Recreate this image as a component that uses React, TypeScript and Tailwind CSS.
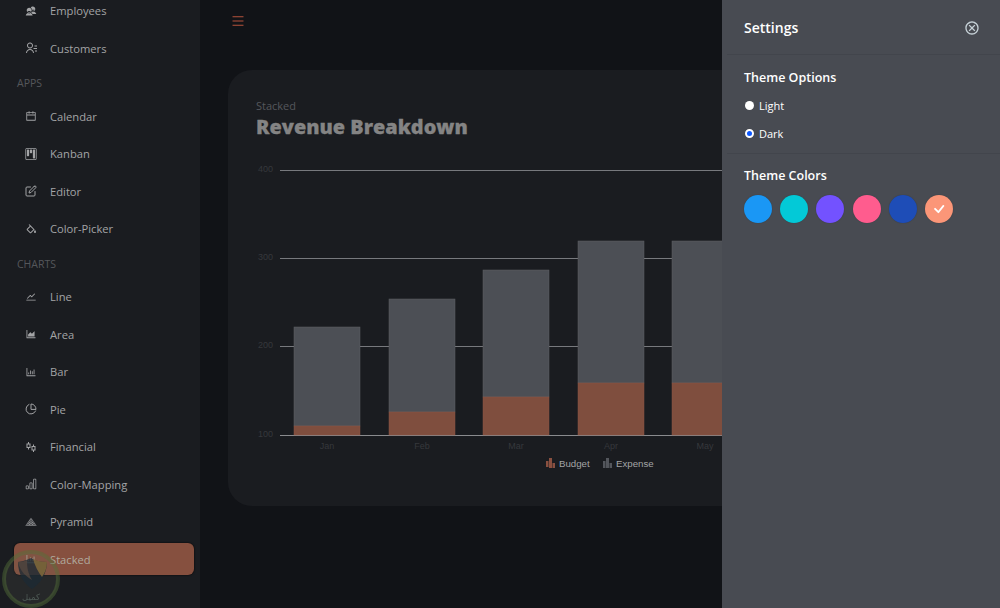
import { IoMdContacts } from "react-icons/io";
import { RiContactsLine, RiStockLine } from "react-icons/ri";
import { AiOutlineCalendar, AiOutlineStock, AiOutlineAreaChart, AiOutlineBarChart, AiOutlineMenu } from "react-icons/ai";
import { BsKanban, BsBarChart, BsCheck } from "react-icons/bs";
import { FiEdit, FiPieChart } from "react-icons/fi";
import { BiColorFill } from "react-icons/bi";
import { GiLouvrePyramid } from "react-icons/gi";
import { MdOutlineCancel } from "react-icons/md";

type Entry = { label: string; Icon?: React.ComponentType<{ className?: string }>; active?: boolean };

const nav: Entry[] = [
  { label: "Employees", Icon: IoMdContacts },
  { label: "Customers", Icon: RiContactsLine },
  { label: "APPS" },
  { label: "Calendar", Icon: AiOutlineCalendar },
  { label: "Kanban", Icon: BsKanban },
  { label: "Editor", Icon: FiEdit },
  { label: "Color-Picker", Icon: BiColorFill },
  { label: "CHARTS" },
  { label: "Line", Icon: AiOutlineStock },
  { label: "Area", Icon: AiOutlineAreaChart },
  { label: "Bar", Icon: AiOutlineBarChart },
  { label: "Pie", Icon: FiPieChart },
  { label: "Financial", Icon: RiStockLine },
  { label: "Color-Mapping", Icon: BsBarChart },
  { label: "Pyramid", Icon: GiLouvrePyramid },
  { label: "Stacked", Icon: AiOutlineBarChart, active: true },
];

const bars = [
  { x: 294, top: 327, mid: 426, label: "Jan" },
  { x: 389, top: 299, mid: 412, label: "Feb" },
  { x: 483, top: 270, mid: 397, label: "Mar" },
  { x: 578, top: 241, mid: 383, label: "Apr" },
  { x: 672, top: 241, mid: 383, label: "May" },
];

function Sidebar() {
  return (
    <aside className="w-[200px] h-[608px] shrink-0 bg-[#1a1c20] overflow-hidden">
      <div className="-mt-[8px]">
        {nav.map(({ label, Icon, active }) =>
          Icon ? (
            <div key={label} className="h-[37.5px] flex items-center">
              <div
                className={
                  active
                    ? "ml-[14px] w-[180px] h-[32px] rounded-md bg-[#86503f] flex items-center pl-[11px] gap-[13px] text-[#b0aa9e] shadow-[0_0_2px_#000]"
                    : "ml-[14px] w-[180px] h-[32px] flex items-center pl-[11px] gap-[13px] text-[#a3a4a6]"
                }
              >
                <Icon className="w-[12px] h-[12px] shrink-0" />
                <span className="text-[11.2px] leading-none">{label}</span>
              </div>
            </div>
          ) : (
            <div key={label} className="h-[30.5px] flex items-center pt-[4px] pl-[17px] text-[10.5px] text-[#55575b]">
              {label}
            </div>
          )
        )}
      </div>
    </aside>
  );
}

function Chart() {
  const grid = [
    { y: 170, label: "400" },
    { y: 258, label: "300" },
    { y: 346, label: "200" },
    { y: 435, label: "100" },
  ];
  return (
    <svg width="600" height="330" viewBox="228 160 600 330" className="block">
      {grid.map((g) => (
        <g key={g.y}>
          <line x1="280" x2="828" y1={g.y + 0.5} y2={g.y + 0.5} stroke={g.y === 435 ? "#8a8b8e" : "#77797d"} strokeWidth="1" />
          <text x="273" y={g.y + 2} textAnchor="end" fontSize="9" fill="#36383c" fontFamily="Liberation Sans, sans-serif">
            {g.label}
          </text>
        </g>
      ))}
      {bars.map((b) => (
        <g key={b.x}>
          <rect x={b.x} y={b.top} width="66" height={b.mid - b.top} fill="#4c4f55" stroke="#5f6165" strokeWidth="0.5" />
          <rect x={b.x} y={b.mid} width="66" height={435 - b.mid} fill="#7f4e3e" stroke="#8c5644" strokeWidth="0.5" />
          <text x={b.x + 33} y="449" textAnchor="middle" fontSize="9" fill="#36383c" fontFamily="Liberation Sans, sans-serif">
            {b.label}
          </text>
        </g>
      ))}
      <g fill="#8a5040">
        <rect x="546" y="461" width="2.5" height="6" />
        <rect x="549" y="458" width="3" height="10" />
        <rect x="552.5" y="463" width="2.5" height="5" />
      </g>
      <text x="559" y="467" fontSize="9.7" fill="#a3a4a6" fontFamily="Liberation Sans, sans-serif">Budget</text>
      <g fill="#53565c">
        <rect x="603" y="461" width="2.5" height="7" />
        <rect x="606" y="458" width="3" height="10" />
        <rect x="609.5" y="463" width="2.5" height="5" />
      </g>
      <text x="616" y="467" fontSize="9.7" fill="#a3a4a6" fontFamily="Liberation Sans, sans-serif">Expense</text>
    </svg>
  );
}

function Main() {
  return (
    <main className="flex-1 min-w-0 h-[608px] bg-[#111317] overflow-hidden">
      <div className="h-[70px] pt-[14px] pl-[31px]">
        <AiOutlineMenu className="w-[14px] h-[14px] text-[#b5533c]" />
      </div>
      <section className="ml-[28px] w-[700px] h-[436px] rounded-[24px] bg-[#1a1c20] overflow-hidden">
        <div className="pl-[28px] pt-[29px] h-[90px]">
          <p className="text-[11px] leading-[14px] text-[#55575c]">Stacked</p>
          <h1 className="text-[19.9px] leading-[28px] font-extrabold text-[#848484] [-webkit-text-stroke:0.3px_#848484]">Revenue Breakdown</h1>
        </div>
        <Chart />
      </section>
    </main>
  );
}

function SettingsPanel() {
  const colors = ["#1a97f5", "#03c9d7", "#7352ff", "#ff5c8e", "#1e4db7", "#fb9678"];
  return (
    <div className="absolute top-0 right-0 w-[278px] h-[608px] bg-[#484b52] text-white">
      <div className="h-[55px] ml-[5px] pt-[1px] pl-[17px] pr-[20px] flex items-center justify-between border-b border-[#42454c]">
        <span className="text-[14px] font-semibold">Settings</span>
        <MdOutlineCancel className="w-[16px] h-[16px] text-[#c5d0d6]" />
      </div>
      <div className="h-[99px] ml-[5px] pl-[17px] border-b border-[#42454c]">
        <p className="text-[12.5px] font-semibold leading-[18px] pt-[14px]">Theme Options</p>
        <div className="flex items-center gap-[5px] h-[28px] mt-[4px]">
          <span className="w-[9px] h-[9px] ml-[1px] rounded-full bg-white" />
          <span className="text-[11px] leading-none">Light</span>
        </div>
        <div className="flex items-center gap-[5px] h-[28px]">
          <span className="w-[9px] h-[9px] ml-[1px] rounded-full bg-[#0b57ff] border-[2px] border-white box-border" />
          <span className="text-[11px] leading-none">Dark</span>
        </div>
      </div>
      <div className="ml-[5px] pl-[17px]">
        <p className="text-[12.5px] font-semibold leading-[18px] pt-[13px]">Theme Colors</p>
        <div className="flex gap-[8.2px] mt-[10px]">
          {colors.map((c, i) => (
            <span
              key={c}
              style={{ backgroundColor: c }}
              className="w-[28px] h-[28px] rounded-full flex items-center justify-center shadow-[0_0_1px_#33383f]"
            >
              {i === 5 && <BsCheck className="w-[20px] h-[20px] text-white" />}
            </span>
          ))}
        </div>
      </div>
    </div>
  );
}

function Watermark() {
  return (
    <div className="absolute left-0 bottom-0 w-[62px] h-[62px] pointer-events-none blur-[0.7px]">
      <svg width="62" height="62" viewBox="0 0 62 62" className="block">
        <circle cx="31" cy="33" r="27" fill="#6a6c60" fillOpacity="0.16" stroke="#55703a" strokeOpacity="0.45" strokeWidth="4" />
        <path d="M18 16 C26 15 30 12 31 12 C36 15 42 16 47 16 C47 28 40 38 32 43 C24 38 18 28 18 16 Z" fill="#1d2a33" fillOpacity="0.8" />
        <path d="M33 13 C37 15 42 16 47 16 C47 22 45 27 42 31 C38 26 35 20 33 13 Z" fill="#9a7a3c" fillOpacity="0.65" />
        <path d="M18 16 C22 16 25 15 27 14 C27 22 28 27 32 34 C27 31 20 26 18 16 Z" fill="#5b4a40" fillOpacity="0.7" />
        <text x="31" y="54" textAnchor="middle" fontSize="8.5" fill="#4e5a55" fontFamily="DejaVu Sans, sans-serif">كميل</text>
      </svg>
    </div>
  );
}

export default function App() {
  return (
    <div className="relative w-[1000px] h-[608px] flex overflow-hidden font-['Open_Sans',sans-serif]">
      <Sidebar />
      <Main />
      <SettingsPanel />
      <Watermark />
    </div>
  );
}
